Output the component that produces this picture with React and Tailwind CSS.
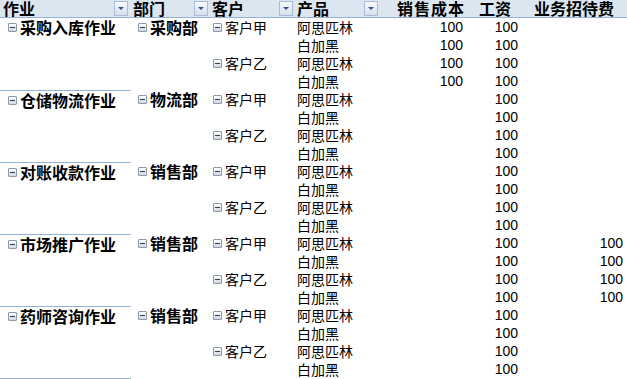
import React from "react";

const groups = [
  { name: "采购入库作业", dept: "采购部", cost: true, fee: false, first: true },
  { name: "仓储物流作业", dept: "物流部", cost: false, fee: false },
  { name: "对账收款作业", dept: "销售部", cost: false, fee: false },
  { name: "市场推广作业", dept: "销售部", cost: false, fee: true },
  { name: "药师咨询作业", dept: "销售部", cost: false, fee: false },
];

const rows = [
  { cust: "客户甲", prod: "阿思匹林" },
  { cust: null, prod: "白加黑" },
  { cust: "客户乙", prod: "阿思匹林" },
  { cust: null, prod: "白加黑" },
];

const cjk = { fontFamily: '"Noto Sans CJK SC", "Liberation Sans", sans-serif' };
const num = { fontFamily: '"Liberation Sans", Arial, sans-serif' };

function Minus() {
  return (
    <span className="inline-flex items-center justify-center w-[9px] h-[9px] border border-[#8d9aab] rounded-[1px] bg-gradient-to-b from-white to-[#cfd8e3] mr-[3px] shrink-0">
      <span className="block w-[5px] h-px bg-[#2f3f55]" />
    </span>
  );
}

function Drop() {
  return (
    <span className="flex items-center justify-center w-[14px] h-[15px] border border-[#a9bcd6] bg-gradient-to-b from-[#f7f9fc] to-[#d6e0ee] shrink-0">
      <span className="block w-0 h-0 border-l-[3px] border-r-[3px] border-t-[3px] border-l-transparent border-r-transparent border-t-[#3a4f8c]" />
    </span>
  );
}

export default function App() {
  return (
    <div className="w-[627px] h-[379px] bg-white text-black overflow-hidden" style={cjk}>
      <div className="flex h-[18px] bg-[#dce6f1] border-b border-[#95b3d7] text-[16px] font-bold leading-[17px]">
        <div className="w-[131px] flex items-center justify-between pl-[3px] pr-[3px]">
          <span className="leading-[17px]">作业</span>
          <Drop />
        </div>
        <div className="w-[79px] flex items-center justify-between pl-[2px] pr-[2px]">
          <span className="leading-[17px]">部门</span>
          <Drop />
        </div>
        <div className="w-[85px] flex items-center justify-between pl-[2px] pr-[2px]">
          <span className="leading-[17px]">客户</span>
          <Drop />
        </div>
        <div className="w-[85px] flex items-center justify-between pl-[2px] pr-[2px]">
          <span className="leading-[17px]">产品</span>
          <Drop />
        </div>
        <div className="w-[86px] flex items-center justify-end pr-[1px] tracking-[1px]">销售成本</div>
        <div className="w-[55px] flex items-center justify-end pr-[10px]">工资</div>
        <div className="w-[106px] flex items-center justify-end pr-[13px]">业务招待费</div>
      </div>
      {groups.map((g, gi) => (
        <div key={gi} className="flex">
          <div className={`w-[131px] h-[72px] ${g.first ? "" : "border-t border-[#95b3d7]"}`}>
            <div className="flex items-center h-[18px] leading-[18px] pl-[8px] text-[16px] font-bold">
              <Minus />
              <span>{g.name}</span>
            </div>
          </div>
          <div className="w-[79px]">
            <div className="flex items-center h-[18px] leading-[18px] pl-[7px] text-[16px] font-bold">
              <Minus />
              <span>{g.dept}</span>
            </div>
          </div>
          <div className="flex flex-col text-[14px] leading-[18px]">
            {rows.map((r, ri) => (
              <div key={ri} className="flex h-[18px] items-center">
                <div className="w-[85px] flex items-center pl-[3px]">
                  {r.cust ? (
                    <>
                      <Minus />
                      <span>{r.cust}</span>
                    </>
                  ) : null}
                </div>
                <div className="w-[85px] pl-[2px]">{r.prod}</div>
                <div className="w-[86px] text-right pr-[3px]" style={num}>
                  {g.cost ? "100" : ""}
                </div>
                <div className="w-[55px] text-right pr-[3px]" style={num}>
                  100
                </div>
                <div className="w-[106px] text-right pr-[4px]" style={num}>
                  {g.fee ? "100" : ""}
                </div>
              </div>
            ))}
          </div>
        </div>
      ))}
      <div className="w-[131px] border-t border-[#95b3d7]" />
    </div>
  );
}
